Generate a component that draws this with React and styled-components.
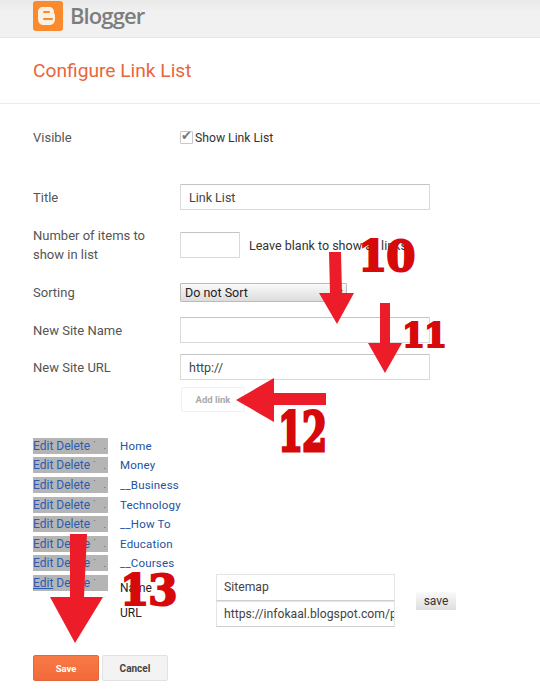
import styled, { createGlobalStyle } from "styled-components";

const GlobalStyle = createGlobalStyle`
  html, body {
    margin: 0;
    padding: 0;
    background: #fff;
    font-family: Roboto, "Liberation Sans", sans-serif;
  }
`;

const links = ["Home", "Money", "__Business", "Technology", "__How To", "Education", "__Courses"];

const App = () => (
  <Page>
    <GlobalStyle />
    <TopBar>
      <BloggerLogo />
      <Brand>Blogger</Brand>
    </TopBar>
    <Heading>
      <h1>Configure Link List</h1>
    </Heading>
    <Form>
      <Row $top={23} $height={20}>
        <Label>Visible</Label>
        <CheckWrap>
          <Checkbox type="checkbox" defaultChecked />
          Show Link List
        </CheckWrap>
      </Row>
      <Row $top={37} $height={26}>
        <Label>Title</Label>
        <TextInput defaultValue="Link List" />
      </Row>
      <Row $top={22} $height={26}>
        <Label $wrap>Number of items to show in list</Label>
        <SmallInput />
        <Hint>Leave blank to show all links</Hint>
      </Row>
      <Row $top={25} $height={19}>
        <Label>Sorting</Label>
        <Select defaultValue="none">
          <option value="none">Do not Sort</option>
        </Select>
      </Row>
      <Row $top={15} $height={26}>
        <Label>New Site Name</Label>
        <TextInput />
      </Row>
      <Row $top={11} $height={26}>
        <Label>New Site URL</Label>
        <TextInput defaultValue="http://" />
      </Row>
      <Row $top={7} $height={25}>
        <Label />
        <AddButton>Add link</AddButton>
      </Row>
    </Form>
    <LinkList>
      {links.map((name) => (
        <LinkRow key={name}>
          <Actions>
            <ActionLink>Edit</ActionLink> <ActionLink>Delete</ActionLink>
            <Sort>{"˙"}</Sort>
            <Sort $gap={5}>.</Sort>
          </Actions>
          <SiteName>{name}</SiteName>
        </LinkRow>
      ))}
      <EditorRow>
        <Actions $shift={2}>
          <ActionLink $under>Edit</ActionLink> <ActionLink>Delete</ActionLink>
          <Sort>{"˙"}</Sort>
        </Actions>
        <EditorLabels>
          <span>Name</span>
          <span>URL</span>
        </EditorLabels>
        <EditorInputs>
          <EditorInput defaultValue="Sitemap" />
          <EditorInput defaultValue="https://infokaal.blogspot.com/p/sitemap.html" />
        </EditorInputs>
        <SmallSave>save</SmallSave>
      </EditorRow>
    </LinkList>
    <Footer>
      <SaveButton>Save</SaveButton>
      <CancelButton>Cancel</CancelButton>
    </Footer>

    <Arrows viewBox="0 0 540 697">
      <polygon fill="#ec1c28" points="329,252 341,252 342,293 354,293 337,324 319,293 330,293" />
      <polygon fill="#ec1c28" points="380,303 390,303 390,343 402,343 385,373 368,343 380,343" />
      <polygon fill="#ec1c28" points="326,393 326,405 274,405 274,422 236,400 274,378 274,393" />
      <polygon fill="#ec1c28" points="70,534 87,534 84,597 103,597 75,643 50,597 70,597" />
    </Arrows>
    <Number $left={358} $top={236} $size={42}>10</Number>
    <Number $left={402} $top={319} $size={33}>11</Number>
    <Number $left={278} $top={404} $size={36} $stretch={1.5}>12</Number>
    <Number $left={120} $top={570} $size={42}>13</Number>
  </Page>
);

export default App;

const BloggerLogo = () => (
  <svg width="30" height="30" viewBox="0 0 30 30">
    <rect x="0" y="0" width="30" height="30" rx="3" fill="#f98a2e" />
    <path
      d="M10 6h6c3 0 5 2 5 5v1c0 1 1 1 1 2v4c0 3-2 6-5 6h-7c-3 0-5-3-5-6v-7c0-3 2-5 5-5z"
      fill="#fdf1e2"
    />
    <rect x="10" y="10" width="7" height="2" rx="1" fill="#f98a2e" />
    <rect x="10" y="17" width="10" height="2" rx="1" fill="#f98a2e" />
  </svg>
);

const Page = styled.div`
  position: relative;
  width: 540px;
  height: 697px;
  overflow: hidden;
  background: #fff;
  color: #444;
  font-size: 13px;
`;

const TopBar = styled.div`
  display: flex;
  align-items: flex-start;
  gap: 7px;
  height: 36px;
  padding: 1px 0 0 33px;
  background: linear-gradient(#e9e9e9, #f1f1f1 12px);
  border-bottom: 1px solid #e6e6e6;
`;

const Brand = styled.span`
  font-family: "Open Sans", sans-serif;
  font-size: 22px;
  font-weight: 600;
  line-height: 28px;
  letter-spacing: -0.9px;
  color: #7d7d7d;
`;

const Heading = styled.div`
  height: 65px;
  display: flex;
  align-items: center;
  padding-left: 33px;
  border-bottom: 1px solid #ebebeb;

  h1 {
    margin: 0;
    font-size: 19.2px;
    font-weight: 400;
    color: #e8663c;
  }
`;

const Form = styled.div`
  display: flex;
  flex-direction: column;
`;

const Row = styled.div`
  display: flex;
  align-items: center;
  padding-left: 33px;
  margin-top: ${(p) => p.$top}px;
  height: ${(p) => p.$height}px;
`;

const Label = styled.div`
  flex: 0 0 147px;
  font-size: 13px;
  line-height: 19px;
  color: #555;
  ${(p) => p.$wrap && "padding-right: 27px; box-sizing: border-box;"}
`;

const CheckWrap = styled.label`
  display: flex;
  align-items: center;
  padding-top: 1px;
  font-size: 12.2px;
  color: #333;
`;

const Checkbox = styled.input`
  position: relative;
  width: 13px;
  height: 13px;
  margin: 0 2px 0 0;
  appearance: none;
  box-sizing: border-box;
  border: 1px solid #c8c8c8;
  border-radius: 1px;
  background: #fff;

  &::before {
    content: "✔";
    position: absolute;
    left: 0;
    top: -3px;
    font-size: 13px;
    line-height: 14px;
    color: #777;
  }
`;

const TextInput = styled.input`
  width: 250px;
  height: 26px;
  box-sizing: border-box;
  padding: 0 8px;
  border: 1px solid #d9d9d9;
  border-top-color: #c4c4c4;
  border-radius: 1px;
  font-family: inherit;
  font-size: 12.5px;
  color: #444;
  outline: none;
`;

const SmallInput = styled(TextInput)`
  width: 60px;
`;

const Hint = styled.span`
  margin-left: 9px;
  font-size: 12.5px;
  color: #333;
`;

const Select = styled.select`
  width: 167px;
  height: 19px;
  box-sizing: border-box;
  padding: 0;
  border: 1px solid #bbb;
  border-radius: 1px;
  background: linear-gradient(#fafafa, #dcdcdc);
  font-family: inherit;
  font-size: 12.5px;
  color: #222;
`;

const AddButton = styled.button`
  width: 64px;
  height: 25px;
  margin-left: 1px;
  padding: 0;
  border: 1px solid #f1f1f1;
  border-radius: 2px;
  background: #fff;
  font-family: inherit;
  font-size: 9.5px;
  font-weight: 700;
  color: #aaa;
`;

const LinkList = styled.div`
  display: flex;
  flex-direction: column;
  margin-top: 24px;
  padding-left: 33px;
`;

const LinkRow = styled.div`
  display: flex;
  align-items: center;
  height: 19.6px;
`;

const Actions = styled.div`
  flex: 0 0 75px;
  display: flex;
  align-items: center;
  gap: 3px;
  height: 16px;
  margin-top: ${(p) => p.$shift || 0}px;
  margin-right: 12px;
  background: #b5b5b5;
  font-size: 12px;
  white-space: nowrap;
  overflow: hidden;
`;

const ActionLink = styled.span`
  color: #2a5db0;
  text-decoration: ${(p) => (p.$under ? "underline" : "none")};
`;

const Sort = styled.span`
  margin-left: ${(p) => p.$gap || 0}px;
  font-size: 10px;
  color: #666;
`;

const SiteName = styled.span`
  font-size: 11.5px;
  letter-spacing: 0.2px;
  color: #2152a3;
`;

const EditorRow = styled.div`
  display: flex;
  align-items: flex-start;
  height: 50px;
`;

const EditorLabels = styled.div`
  flex: 0 0 96px;
  display: flex;
  flex-direction: column;
  gap: 6px;
  padding-top: 6px;
  font-size: 12px;
  line-height: 19px;
  color: #222;
`;

const EditorInputs = styled.div`
  display: flex;
  flex-direction: column;
  margin-top: 1px;
`;

const EditorInput = styled.input`
  width: 179px;
  height: 26.5px;
  box-sizing: border-box;
  padding: 0 0 0 7px;
  border: 1px solid #e4e4e4;
  border-bottom-color: #cfcfcf;
  font-family: inherit;
  font-size: 12.2px;
  color: #444;
  outline: none;
`;

const SmallSave = styled.button`
  width: 40px;
  height: 18px;
  margin: 19px 0 0 21px;
  padding: 0;
  border: none;
  background: linear-gradient(#fafafa, #dedede);
  font-family: inherit;
  font-size: 12px;
  color: #333;
`;

const Footer = styled.div`
  display: flex;
  gap: 3px;
  margin-top: 32px;
  padding-left: 33px;
`;

const SaveButton = styled.button`
  width: 66px;
  height: 26px;
  padding: 0;
  border: 1px solid #e4683a;
  border-radius: 2px;
  background: linear-gradient(#f97a46, #f26a3a);
  font-family: inherit;
  font-size: 9.5px;
  font-weight: 700;
  color: #fff;
`;

const CancelButton = styled(SaveButton)`
  border-color: #e2e2e2;
  background: #f3f3f3;
  font-size: 10px;
  color: #444;
`;

const Arrows = styled.svg`
  position: absolute;
  inset: 0;
  width: 540px;
  height: 697px;
  pointer-events: none;
`;

const Number = styled.span`
  position: absolute;
  left: ${(p) => p.$left}px;
  top: ${(p) => p.$top}px;
  font-family: "DejaVu Serif", serif;
  font-size: ${(p) => p.$size}px;
  font-weight: 700;
  line-height: 1;
  letter-spacing: -1px;
  color: #d60a0a;
  -webkit-text-stroke: 2px #d60a0a;
  transform-origin: left top;
  transform: scaleY(${(p) => p.$stretch || 1});
`;
